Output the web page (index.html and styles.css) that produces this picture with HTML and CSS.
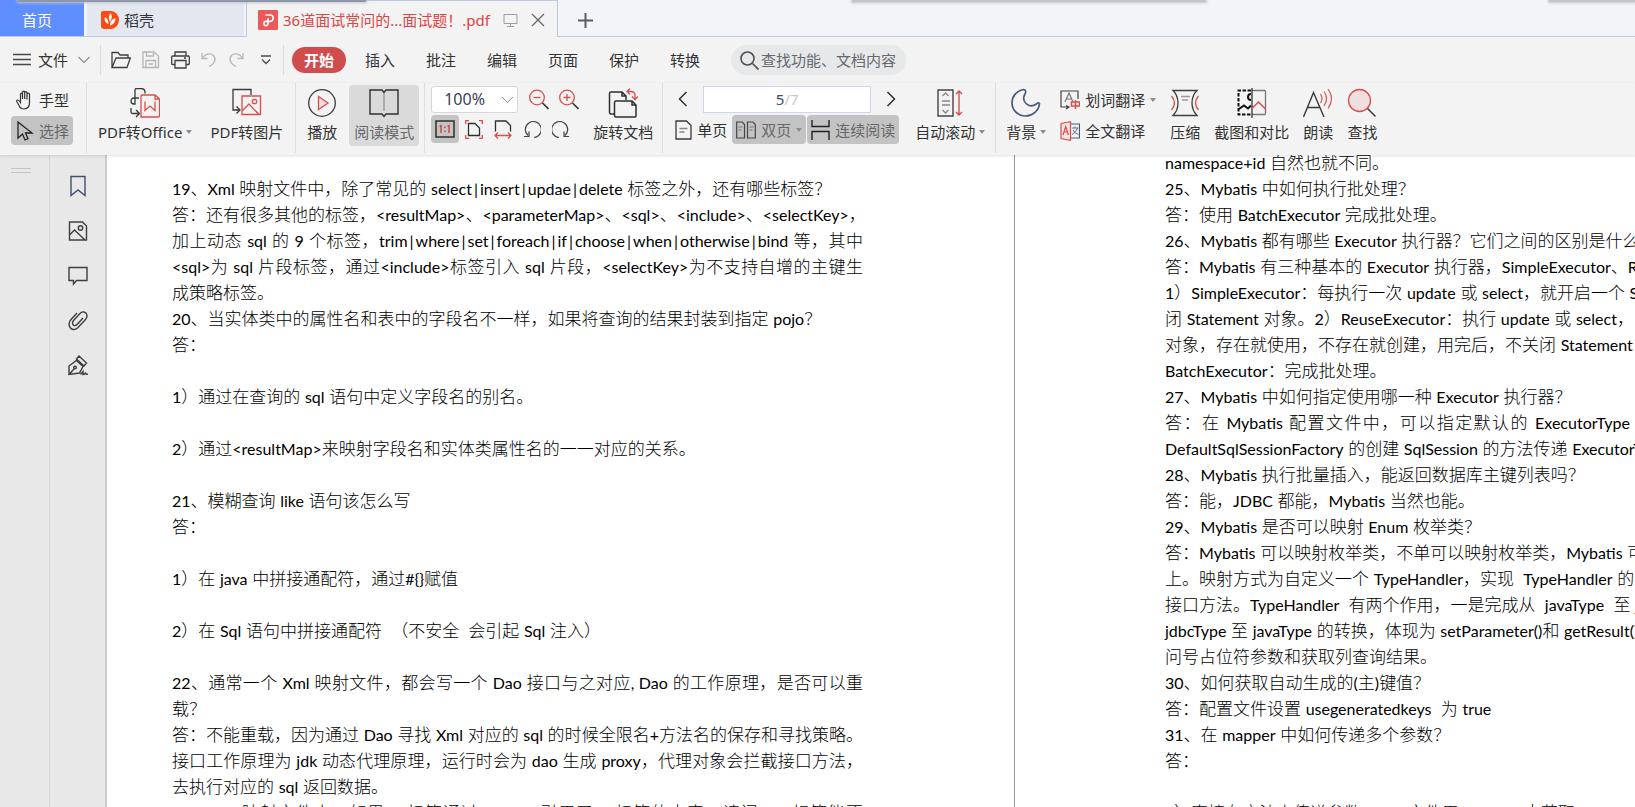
FILE: index.html
```html
<!DOCTYPE html>
<html lang="zh-CN">
<head>
<meta charset="utf-8">
<title>36道面试常问的...面试题！.pdf</title>
<link rel="stylesheet" href="styles.css">
</head>
<body>
<header class="tabs">
  <i class="shade shade-a"></i><i class="shade shade-b"></i><i class="shade shade-c"></i>
  <button class="tab home">首页</button>
  <button class="tab store">
    <svg width="18" height="20" viewBox="0 0 18 20"><path d="M2 1h8a8 9 0 0 1 0 18H3a3 3 0 0 1-3-3V3a2 2 0 0 1 2-2z" fill="#fb4a12"/><path d="M9.500 3c2 2.500 1.500 6-.5 9C7.500 8.500 7.500 6 9.500 3zM4 7c2.500 1.500 3.500 4 3.500 7C4.500 13 3 10 4 7zM14.500 8c0 4-2 6.500-5.500 7.500C9 12 11 9 14.500 8z" fill="#fff"/></svg>
    稻壳
  </button>
  <div class="tab active">
    <svg width="20" height="20" viewBox="0 0 20 20" fill="none"><rect width="20" height="20" rx="1" fill="#ea5a5a"/><path d="M7.500 5H12a3.200 3.200 0 0 1 0 6.400H8a2.100 2.100 0 1 0 2.100 2.100V8" stroke="#fff" stroke-width="1.600"/></svg>
    <span class="name">36道面试常问的...面试题！.pdf</span>
    <svg class="screen" width="15" height="15" viewBox="0 0 15 15" fill="none" stroke="#9b9da1"><path d="M1 1.500h13v9H1zM7.500 10.500v3M4 13.500h7"/></svg>
    <button class="plain" aria-label="关闭"><svg width="14" height="14" viewBox="0 0 14 14" stroke="#66686c" stroke-width="1.300"><path d="M1 1l12 12M13 1L1 13"/></svg></button>
  </div>
  <button class="plain add" aria-label="新建"><svg width="15" height="15" viewBox="0 0 15 15" stroke="#5c5d60" stroke-width="2"><path d="M7.500 0v15M0 7.500h15"/></svg></button>
</header>

<nav class="menu">
  <button class="plain file">
    <svg width="18" height="14" viewBox="0 0 18 14" stroke="#4a4a4a" stroke-width="1.300"><path d="M0 1.500h18M0 6.500h18M0 11.500h18"/></svg>
    文件
    <svg class="down" width="12" height="8" viewBox="0 0 12 8" fill="none" stroke="#8e8e8e" stroke-width="1.200"><path d="M.5 1L6 6.500 11.500 1"/></svg>
  </button>
  <div class="quick">
    <button class="plain" aria-label="打开"><svg width="20" height="18" viewBox="0 0 20 18" fill="none" stroke="#3f3f3f" stroke-width="1.300"><path d="M1 16V1.500h6l2 2.500h8v3M1 16.500L5 7h14.300L16 16.500z"/></svg></button>
    <button class="plain" aria-label="保存"><svg width="18" height="18" viewBox="0 0 18 18" fill="none" stroke="#b5b5b5" stroke-width="1.300"><path d="M1 1h11l4.500 4v11.500H1zM4.500 1v4h7V2M4 16.500v-7h9.500v7M6.500 13h4.500"/></svg></button>
    <button class="plain" aria-label="打印"><svg width="19" height="18" viewBox="0 0 19 18" fill="none" stroke="#3f3f3f" stroke-width="1.300"><path d="M4 5V1h11v4M4 13.500H1.500a.8.800 0 0 1-.8-.8V6q0-1 1-1h15.600q1 0 1 1v6.700q0 .8-.8.800H15M4 9.500h11V17H4zM13 7h2"/></svg></button>
    <button class="plain" aria-label="撤销"><svg width="16" height="16" viewBox="0 0 16 16" fill="none" stroke="#b9b9b9" stroke-width="1.300"><path d="M1 1v5.500h5.500M1.500 6C5 1 10 1 12.500 3.500c3 3.500 1.500 8-4.500 11"/></svg></button>
    <button class="plain" aria-label="重做"><svg width="16" height="16" viewBox="0 0 16 16" fill="none" stroke="#b9b9b9" stroke-width="1.300"><path d="M15 1v5.500H9.500M14.500 6C11 1 6 1 3.500 3.500c-3 3.500-1.500 8 4.500 11"/></svg></button>
    <button class="plain" aria-label="更多"><svg width="10" height="10" viewBox="0 0 10 10" fill="none" stroke="#4d4d4d" stroke-width="1.300"><path d="M0 1h10M1 4.500l4 4 4-4"/></svg></button>
  </div>
  <div class="items">
    <button class="start">开始</button>
    <button class="plain">插入</button>
    <button class="plain">批注</button>
    <button class="plain">编辑</button>
    <button class="plain">页面</button>
    <button class="plain">保护</button>
    <button class="plain">转换</button>
  </div>
  <label class="search">
    <svg width="19" height="19" viewBox="0 0 19 19" fill="none" stroke="#4f4f4f" stroke-width="1.600"><circle cx="7.500" cy="7.500" r="6.500"/><path d="M12.500 12.500l6 6"/></svg>
    <input type="text" placeholder="查找功能、文档内容" aria-label="查找功能、文档内容">
  </label>
</nav>

<section class="ribbon">
  <div class="group tools">
    <button class="row"><svg width="18" height="20" viewBox="0 0 18 20" fill="none" stroke="#333" stroke-width="1.200"><path d="M4.500 11V4.500q0-1.300 1-1.300t1 1.300V9 2.500q0-1.300 1.100-1.300t1.100 1.300V9 3q0-1.300 1.100-1.300T11 3v6.500-5q0-1.300 1.200-1.300t1.300 1.300V12q.3 6.500-5.500 7-3.500 0-5-3.500L.8 11.500q-.4-1.500 1-1.500 1.200 0 2.700 2.500z" /></svg>手型</button>
    <button class="row on"><svg width="18" height="20" viewBox="0 0 18 20" fill="none" stroke="#222" stroke-width="1.300"><path d="M2 1v16l4.500-4 2.500 6 3-1.300-2.500-5.700H16z"/></svg>选择</button>
  </div>

  <div class="group convert">
    <button class="big">
      <svg width="30" height="30" viewBox="0 0 30 30" fill="none" stroke="#3a3a3a" stroke-width="1.300"><path d="M5 11V2q0-1.500 1.500-1.500H11q4 0 4 4v1M9 10H4a3 3 0 1 0 0 6h1V9M1 20v4q0 1.500 1.500 1.500H9M6 22l3.500 3.500L6 29"/><path d="M11 29V8q0-1 1-1h13l4.500 4v17q0 1-1 1zM25 7v4h4" stroke="#d94f4f"/><path d="M15 13.500v9l5-4.500 5 4.500v-9" stroke="#d94f4f"/></svg>
      <span class="arrow">PDF转Office</span>
    </button>
    <button class="big">
      <svg width="30" height="30" viewBox="0 0 30 30" fill="none" stroke="#3a3a3a" stroke-width="1.300"><path d="M19 7V1.500H1V22h6M4.500 18.500L8 22l-3.500 3.500"/><g stroke="#d94f4f"><path d="M10 8h18.500v18.500H10zM10 23l7-7 10 10.500"/><circle cx="22.500" cy="13.500" r="2.200"/></g></svg>
      PDF转图片
    </button>
  </div>

  <div class="group show">
    <button class="big">
      <svg width="30" height="30" viewBox="0 0 30 30" fill="none" stroke="#3a3a3a" stroke-width="1.300"><circle cx="15" cy="15" r="13.300"/><path d="M11.500 8.500v13L21 15z" stroke="#d94f4f" fill="#f6dede"/></svg>
      播放
    </button>
    <button class="big read">
      <svg width="30" height="30" viewBox="0 0 30 30" fill="none" stroke="#2f2f2f" stroke-width="1.400"><path d="M15 4.500L13 2H1v24h12l2 2.500L17 26h12V2H17z"/><path d="M15 5v18" stroke="#9a9a9a"/></svg>
      阅读模式
    </button>
  </div>

  <div class="group zoom">
    <div class="stack">
      <div class="line-top">
        <select class="percent" aria-label="缩放比例"><option>100%</option></select>
        <button class="plain" aria-label="缩小"><svg width="20" height="21" viewBox="0 0 20 21" fill="none" stroke="#d94f4f" stroke-width="1.300"><circle cx="8" cy="8.500" r="7.300"/><path d="M4.500 8.500h7"/><path d="M13.500 14l6 6" stroke="#333" stroke-width="1.600"/></svg></button>
        <button class="plain" aria-label="放大"><svg width="20" height="21" viewBox="0 0 20 21" fill="none" stroke="#d94f4f" stroke-width="1.300"><circle cx="8" cy="8.500" r="7.300"/><path d="M4.500 8.500h7M8 5v7"/><path d="M13.500 14l6 6" stroke="#333" stroke-width="1.600"/></svg></button>
      </div>
      <div class="line-low">
        <button class="plain actual" aria-label="实际大小"><svg width="20" height="18" viewBox="0 0 20 18" fill="none" stroke="#2f2f2f" stroke-width="1.500"><path d="M1 1h18v16H1z"/><path d="M4.500 6.500L6 5.500v7.500M12.500 6.500l1.500-1v7.500M10 6.500V8M10 10.500V12" stroke="#d04545" stroke-width="1.400"/></svg></button>
        <button class="plain" aria-label="适合页面"><svg width="18" height="19" viewBox="0 0 18 19" fill="none" stroke="#2f2f2f" stroke-width="1.300"><path d="M3.500 3.500H10L14.500 8v7.500h-11z"/><path d="M.7 4V.7H4M14 .7h3.300V4M.7 15v3.300H4M14 18.300h3.300V15" stroke="#d94f4f"/></svg></button>
        <button class="plain" aria-label="适合宽度"><svg width="18" height="19" viewBox="0 0 18 19" fill="none" stroke="#2f2f2f" stroke-width="1.300"><path d="M1.500 11.500V1h10.500l4.500 4.500v6"/><path d="M1 15.500h16M4 12.500l-3 3 3 3M14 12.500l3 3-3 3" stroke="#d94f4f"/></svg></button>
        <button class="plain" aria-label="向左旋转"><svg width="18" height="19" viewBox="0 0 18 19" fill="none" stroke="#444" stroke-width="1.200"><path d="M5 15.500A8 8 0 1 1 11 17.500M1 16.500h5v-5"/></svg></button>
        <button class="plain" aria-label="向右旋转"><svg width="18" height="19" viewBox="0 0 18 19" fill="none" stroke="#444" stroke-width="1.200"><path d="M13 15.500A8 8 0 1 0 7 17.500M17 16.500h-5v-5"/></svg></button>
      </div>
    </div>
    <button class="big">
      <svg width="30" height="30" viewBox="0 0 30 30" fill="none" stroke="#2f2f2f" stroke-width="1.500"><path d="M6 26H3q-1.500 0-1.500-1.500V5.500Q1.500 4 3 4h11l4 4v4M14 4v4h4"/><path d="M8 13h16l4 4v11q0 1-1 1H8q-1.500 0-1.500-1.500v-13Q6.500 13 8 13zM24 13v4h4" fill="#f3f3f3"/><path d="M19.500 3.500H23q4 0 4 4V11M22 .5l-3 3 3 3M24 8.500l3 3 3-3" stroke="#d94f4f" stroke-width="1.300"/></svg>
      旋转文档
    </button>
  </div>

  <div class="group paging">
    <div class="stack">
      <div class="line-top pager">
        <button class="plain" aria-label="上一页"><svg width="10" height="16" viewBox="0 0 10 16" fill="none" stroke="#2f2f2f" stroke-width="1.500"><path d="M8.500 1L1.500 8l7 7"/></svg></button>
        <button class="page-box">5<span>/7</span></button>
        <button class="plain" aria-label="下一页"><svg width="10" height="16" viewBox="0 0 10 16" fill="none" stroke="#2f2f2f" stroke-width="1.500"><path d="M1.500 1l7 7-7 7"/></svg></button>
      </div>
      <div class="modes">
        <button class="mode"><svg width="17" height="20" viewBox="0 0 17 20" fill="none" stroke="#3a3a3a" stroke-width="1.300"><path d="M1 1h10.500L16 5.500V19H1z"/><path d="M4.500 8.500h8M4.500 12h5" stroke="#888"/></svg>单页</button>
        <button class="mode on arrow"><svg width="20" height="18" viewBox="0 0 20 18" fill="none" stroke="#444" stroke-width="1.200"><path d="M.7 1h5.500L8.500 3.500V17H.7zM11.500 1H17l2.300 2.500V17h-7.800z"/><path d="M2.500 6h4M2.500 9h3M13.500 6h4M13.500 9h3" stroke="#777"/></svg>双页</button>
        <button class="mode on"><svg width="19" height="20" viewBox="0 0 19 20" fill="none" stroke="#222" stroke-width="1.400"><path d="M1 0v6.500h17V0M1 20v-8.500h17V20"/></svg>连续阅读</button>
      </div>
    </div>
    <button class="big">
      <svg width="30" height="30" viewBox="0 0 30 30" fill="none" stroke="#444" stroke-width="1.400"><path d="M3 2h15v26H3z"/><path d="M7.500 8L10.500 5l3 3M7.500 22l3 3 3-3M7 13h8M7 17h8" stroke="#888"/><path d="M24 3v24M21 6l3-3 3 3M21 24l3 3 3-3" stroke="#d94f4f"/></svg>
      <span class="arrow">自动滚动</span>
    </button>
  </div>

  <div class="group extra">
    <button class="big">
      <svg width="30" height="30" viewBox="0 0 30 30" fill="none" stroke="#495a7c" stroke-width="1.700"><path d="M12.500 1.500C5 3 1 8.500 1 15c0 7 6 13 13.500 13C21 28 28 23 28.500 15.500c-1-1-2-.5-3 .5-4 2.500-8 2-10.500-.5s-3-6-1-9.500c1-2 1-4.500-1.500-4.500z"/></svg>
      <span class="arrow">背景</span>
    </button>
    <div class="translate">
      <button class="row arrow"><svg width="20" height="20" viewBox="0 0 20 20" fill="none" stroke="#444" stroke-width="1.200"><path d="M18 9V1H1v16h8M6 15.500L9 17l-3 2"/><path d="M5 12L9 3l4 9M6.500 9h5" stroke="#777"/><path d="M11.500 12h8v4h-8zM15.500 10v9" stroke="#d94f4f" stroke-width="1.600"/></svg>划词翻译</button>
      <button class="row"><svg width="20" height="20" viewBox="0 0 20 20" fill="none" stroke="#d94f4f" stroke-width="1.200"><path d="M10 3h9.500v14H10" stroke="#495a7c"/><path d="M12 7h6.500M15 5.500V7M17.500 7q-1 4-5.500 6.500M13 9q1.500 3.500 5.500 4.500" stroke="#66748f" stroke-width="1"/><path d="M1 2.500L10.500.7v18.600L1 17.500z" fill="#fbe3e3"/><path d="M3 14L5.700 5.500 8.500 14M4 11h3.700"/></svg>全文翻译</button>
    </div>
    <button class="big">
      <svg width="30" height="30" viewBox="0 0 30 30" fill="none" stroke="#3f3f3f" stroke-width="1.300"><path d="M3 2.500h24q-5 5-5 12.500t5 12.500H3q5-5 5-12.500T3 2.500z"/><path d="M11 8.500h9M12 12h6" stroke="#999"/><path d="M1.500 8q6 7 0 14M28.500 8q-6 7 0 14" stroke="#d94f4f"/></svg>
      压缩
    </button>
    <button class="big">
      <svg width="30" height="30" viewBox="0 0 30 30" fill="none"><path d="M14 2.500H1.500v24H14" stroke="#111" stroke-width="2" stroke-dasharray="3.500 1.500"/><path d="M14 6a3 3 0 1 0 0 6M2 21l5-3.500 4 3 3-3" stroke="#111" stroke-width="2"/><path d="M15 2.500h12.500q1 0 1 1v22q0 1-1 1H15" stroke="#777" stroke-width="1.300"/><path d="M15 0v30" stroke="#333" stroke-width="1.300"/><path d="M15.500 20l6-6 7 7" stroke="#d94f4f" stroke-width="1.500"/></svg>
      截图和对比
    </button>
    <button class="big">
      <svg width="30" height="30" viewBox="0 0 30 30" fill="none" stroke="#3a3a3a" stroke-width="1.400"><path d="M.5 29L10.500 4.500 21 29M4.500 19.500h12.500"/><path d="M17.500 6q3 4.500 0 9M21 3.500q5 7 0 14.500M25 1q7 9.500 0 19.500" stroke="#d94f4f" stroke-width="1.200"/></svg>
      朗读
    </button>
    <button class="big">
      <svg width="30" height="30" viewBox="0 0 30 30" fill="none" stroke="#d94f4f" stroke-width="1.300"><circle cx="12.500" cy="12.500" r="11" fill="#f1dfdf"/><path d="M20.500 20.500l8 8" stroke="#333" stroke-width="1.500"/></svg>
      查找
    </button>
  </div>
</section>

<main class="work">
  <div class="grip"><i></i></div>
  <aside class="side">
    <button class="plain" aria-label="书签"><svg width="20" height="22" viewBox="0 0 20 22" fill="none" stroke="#414f6b" stroke-width="1.400"><path d="M3 1.500h14v19L10 15l-7 5.500z"/></svg></button>
    <button class="plain" aria-label="缩略图"><svg width="20" height="22" viewBox="0 0 20 22" fill="none" stroke="#3f3f3f" stroke-width="1.400"><path d="M1.500 2h13L18.500 6v14h-17zM1.500 15l5-5 10.500 10"/><circle cx="12.500" cy="8" r="2.200"/></svg></button>
    <button class="plain" aria-label="批注"><svg width="20" height="22" viewBox="0 0 20 22" fill="none" stroke="#3f3f3f" stroke-width="1.400"><path d="M1 2.500h18v13H8.500L5.500 19v-3.500H1z"/></svg></button>
    <button class="plain" aria-label="附件"><svg width="20" height="22" viewBox="0 0 20 22" fill="none" stroke="#3f3f3f" stroke-width="1.400"><path d="M9 3L3 9.500C-1 14 2 19 5 19.500c2 .3 3.500-.5 5-2l7.500-8c3-3.500 1-7-1.500-7.500-1.500-.3-3 .2-4.500 2l-6 6.500c-2 2.500-.5 4.500.5 5 1.200.4 2.200 0 3.300-1.200L15 8"/></svg></button>
    <button class="plain" aria-label="签名"><svg width="20" height="22" viewBox="0 0 20 22" fill="none" stroke="#3f3f3f" stroke-width="1.400"><path d="M1 19.500V11l7.500-5.500 6.500 6L11.500 18 1 19.500l5-5.500M8.500 4L11 1l7.500 7-2.500 3L8.500 4z"/><circle cx="7" cy="12.500" r="1.300"/><path d="M12.500 19.500l2.500-3v3q2 0 2.500-2 .3 2.500 2.500 1.500"/></svg></button>
  </aside>
  <div class="viewer">
    <article class="page">
      <p></p>
      <p><span>19</span>、<span>Xml</span> 映射文件中，除了常见的 <span>select<b>|</b>insert<b>|</b>updae<b>|</b>delete</span> 标签之外，还有哪些标签？</p>
      <p class="full">答：还有很多其他的标签，<span>&lt;resultMap&gt;</span>、<span>&lt;parameterMap&gt;</span>、<span>&lt;sql&gt;</span>、<span>&lt;include&gt;</span>、<span>&lt;selectKey&gt;</span>，</p>
      <p class="full">加上动态 <span>sql</span> 的 <span>9</span> 个标签，<span>trim<b>|</b>where<b>|</b>set<b>|</b>foreach<b>|</b>if<b>|</b>choose<b>|</b>when<b>|</b>otherwise<b>|</b>bind</span> 等，其中</p>
      <p class="full"><span>&lt;sql&gt;</span>为 <span>sql</span> 片段标签，通过<span>&lt;include&gt;</span>标签引入 <span>sql</span> 片段，<span>&lt;selectKey&gt;</span>为不支持自增的主键生</p>
      <p>成策略标签。</p>
      <p><span>20</span>、当实体类中的属性名和表中的字段名不一样，如果将查询的结果封装到指定 <span>pojo</span>？</p>
      <p>答：</p>
      <p></p>
      <p><span>1</span>）通过在查询的 <span>sql</span> 语句中定义字段名的别名。</p>
      <p></p>
      <p><span>2</span>）通过<span>&lt;resultMap&gt;</span>来映射字段名和实体类属性名的一一对应的关系。</p>
      <p></p>
      <p><span>21</span>、模糊查询 <span>like</span> 语句该怎么写</p>
      <p>答：</p>
      <p></p>
      <p><span>1</span>）在 <span>java</span> 中拼接通配符，通过<span>#{}</span>赋值</p>
      <p></p>
      <p><span>2</span>）在 <span>Sql</span> 语句中拼接通配符&nbsp; （不安全&nbsp; 会引起 <span>Sql</span> 注入）</p>
      <p></p>
      <p class="full"><span>22</span>、通常一个 <span>Xml</span> 映射文件，都会写一个 <span>Dao</span> 接口与之对应<span>, Dao</span> 的工作原理，是否可以重</p>
      <p>载？</p>
      <p class="full">答：不能重载，因为通过 <span>Dao</span> 寻找 <span>Xml</span> 对应的 <span>sql</span> 的时候全限名<span>+</span>方法名的保存和寻找策略。</p>
      <p class="full">接口工作原理为 <span>jdk</span> 动态代理原理，运行时会为 <span>dao</span> 生成 <span>proxy</span>，代理对象会拦截接口方法，</p>
      <p>去执行对应的 <span>sql</span> 返回数据。</p>
      <p class="full"><span>23</span>、<span>Xml</span> 映射文件中，如果 <span>A</span> 标签通过 <span>include</span> 引用了 <span>B</span> 标签的内容，请问，<span>B</span> 标签能否</p>
    </article>
    <article class="page">
      <p><span>namespace+id</span> 自然也就不同。</p>
      <p><span>25</span>、<span>Mybatis</span> 中如何执行批处理？</p>
      <p>答：使用 <span>BatchExecutor</span> 完成批处理。</p>
      <p><span>26</span>、<span>Mybatis</span> 都有哪些 <span>Executor</span> 执行器？它们之间的区别是什么？</p>
      <p>答：<span>Mybatis</span> 有三种基本的 <span>Executor</span> 执行器，<span>SimpleExecutor</span>、<span>ReuseExecutor</span>、</p>
      <p><span>1</span>）<span>SimpleExecutor</span>：每执行一次 <span>update</span> 或 <span>select</span>，就开启一个 <span>Statement</span></p>
      <p>闭 <span>Statement</span> 对象。<span>2</span>）<span>ReuseExecutor</span>：执行 <span>update</span> 或 <span>select</span>，以 <span>sql</span></p>
      <p>对象，存在就使用，不存在就创建，用完后，不关闭 <span>Statement</span> 对象，</p>
      <p><span>BatchExecutor</span>：完成批处理。</p>
      <p><span>27</span>、<span>Mybatis</span> 中如何指定使用哪一种 <span>Executor</span> 执行器？</p>
      <p class="full">答：在 <span>Mybatis</span> 配置文件中，可以指定默认的 <span>ExecutorType</span> 执行器类型，也可以手动给</p>
      <p><span>DefaultSqlSessionFactory</span> 的创建 <span>SqlSession</span> 的方法传递 <span>ExecutorType</span></p>
      <p><span>28</span>、<span>Mybatis</span> 执行批量插入，能返回数据库主键列表吗？</p>
      <p>答：能，<span>JDBC</span> 都能，<span>Mybatis</span> 当然也能。</p>
      <p><span>29</span>、<span>Mybatis</span> 是否可以映射 <span>Enum</span> 枚举类？</p>
      <p>答：<span>Mybatis</span> 可以映射枚举类，不单可以映射枚举类，<span>Mybatis</span> 可以映射</p>
      <p>上。映射方式为自定义一个 <span>TypeHandler</span>，实现&nbsp; <span>TypeHandler</span> 的 <span>setParameter()</span></p>
      <p>接口方法。<span>TypeHandler</span>&nbsp; 有两个作用，一是完成从&nbsp; <span>javaType</span>&nbsp; 至 <span>jdbcType</span></p>
      <p><span>jdbcType</span> 至 <span>javaType</span> 的转换，体现为 <span>setParameter()</span>和 <span>getResult()</span></p>
      <p>问号占位符参数和获取列查询结果。</p>
      <p><span>30</span>、如何获取自动生成的<span>(</span>主<span>)</span>键值？</p>
      <p>答：配置文件设置 <span>usegeneratedkeys</span>&nbsp; 为 <span>true</span></p>
      <p><span>31</span>、在 <span>mapper</span> 中如何传递多个参数？</p>
      <p>答：</p>
      <p></p>
      <p><span>1</span>）直接在方法中传递参数，<span>xml</span> 文件用 <span>#{0} #{1}</span>来获取</p>
    </article>
  </div>
</main>
</body>
</html>
```

FILE: styles.css
```css
* { box-sizing: border-box; }

body {
  margin: 0;
  height: 100vh;
  display: flex;
  flex-direction: column;
  overflow: hidden;
  background: #f3f3f3;
  color: #333;
  font: 15px/20px "Noto Sans", "Noto Sans CJK SC", sans-serif;
}

button, input, select { font: inherit; color: inherit; }
button {
  border: 0;
  padding: 0;
  background: none;
  white-space: nowrap;
  flex: none;
}
svg { display: block; flex: none; }
.plain { display: flex; align-items: center; }

/* document tabs */
.tabs {
  position: relative;
  flex: none;
  display: flex;
  height: 37px;
  background: #f2f4f9;
  border-bottom: 1px solid #bcc8db;
}
.tab { display: flex; align-items: center; padding-top: 4px; }
.home {
  width: 84px;
  justify-content: center;
  padding-right: 10px;
  background: #5f8fff;
  color: #fff;
}
.store {
  gap: 5px;
  width: 157px;
  margin-left: 3px;
  padding-left: 14px;
  background: #e2e7f0;
}
.active {
  margin: 0 0 -1px 2px;
  padding: 2px 12px 0 11px;
  border: solid #bcc8db;
  border-width: 1px 1px 0;
  background: #f3f3f3;
  color: #da4545;
}
.name { margin: 0 13px 0 5px; }
.screen { margin-right: 13px; }
.add { margin-left: 20px; padding-top: 4px; }
.shade {
  position: absolute;
  top: 0;
  height: 2px;
  background: #c3c5c9;
  box-shadow: 0 0 3px 1px #c3c5c9;
}
.shade-a { left: 18px; width: 348px; background: #8f98ab; }
.shade-b { left: 852px; width: 354px; }
.shade-c { left: 1549px; right: 0; }

/* menu row */
.menu {
  flex: none;
  display: flex;
  align-items: center;
  height: 46px;
  padding-left: 13px;
}
.file { gap: 7px; padding-right: 10px; }
.down { margin-left: 3px; }
.quick {
  display: flex;
  align-items: center;
  gap: 11px;
  height: 30px;
  padding: 0 12px 0 10px;
  border: solid #dcdcdc;
  border-width: 0 1px;
}
.quick > :last-child { margin-left: 6px; }
.items { display: flex; align-items: center; gap: 31px; margin-left: 8px; }
.start {
  width: 54px;
  height: 26px;
  margin-right: -12px;
  border-radius: 13px;
  background: #d14d4d;
  color: #fff;
  font-weight: 700;
}
.search {
  display: flex;
  align-items: center;
  gap: 2px;
  width: 175px;
  height: 30px;
  margin-left: 31px;
  padding-left: 9px;
  border-radius: 15px;
  background: #e7e8ea;
}
.search input {
  width: 140px;
  padding: 0;
  border: 0;
  outline: 0;
  background: none;
}
.search input::placeholder { color: #66686b; opacity: 1; }

/* ribbon */
.ribbon {
  position: relative;
  flex: none;
  display: flex;
  height: 72px;
  box-shadow: 0 1px 3px rgba(0, 0, 0, .12);
  background: #f3f3f3;
}
.group {
  display: flex;
  align-items: flex-start;
  flex: none;
  height: 70px;
  padding-top: 2px;
  border-right: 1px solid #dedede;
}
.big {
  display: flex;
  flex-direction: column;
  align-items: center;
  gap: 4px;
  height: 61px;
  padding-top: 3px;
}
.arrow { display: flex; align-items: center; gap: 4px; }
.arrow::after {
  content: "";
  border: solid transparent;
  border-width: 4px 3px 0;
  border-top-color: #8c8c8c;
}
.row {
  display: flex;
  align-items: center;
  gap: 5px;
  height: 29px;
  border-radius: 4px;
}
.on { background: #c3c3c3; color: #66686b; }

.tools { flex-direction: column; gap: 2px; padding-left: 11px; padding-right: 13px; }
.tools .row { width: 62px; padding-left: 5px; }
.convert { gap: 18px; padding-left: 11px; padding-right: 12px; }
.show { gap: 12px; padding-left: 11px; padding-right: 5px; }
.read { width: 70px; border-radius: 4px; background: #dadada; color: #66686b; }

.stack { display: flex; flex-direction: column; gap: 2px; }
.line-top, .line-low { display: flex; align-items: center; gap: 10px; height: 28px; }
.zoom { gap: 14px; padding-left: 6px; padding-right: 9px; }
.percent {
  appearance: none;
  width: 87px;
  height: 27px;
  padding: 0 0 0 12px;
  border: 1px solid #d5d7db;
  border-radius: 3px;
  color: #3a4152;
  font-size: 16px;
  background:
    linear-gradient(45deg, transparent 44%, #8d94a3 44% 58%, transparent 58%) 70px 10px / 6px 6px no-repeat,
    linear-gradient(-45deg, transparent 44%, #8d94a3 44% 58%, transparent 58%) 75px 10px / 6px 6px no-repeat,
    #fff;
}
.percent + .plain { margin-left: 1px; }
.line-low { gap: 11px; }
.actual {
  justify-content: center;
  width: 28px;
  height: 28px;
  margin-right: -5px;
  border-radius: 4px;
  background: #c3c3c3;
}

.paging { gap: 16px; padding-left: 12px; padding-right: 10px; }
.pager { gap: 15px; padding-left: 3px; }
.page-box {
  width: 168px;
  height: 27px;
  border: 1px solid #cdd6ea;
  background: #fff;
  color: #3f4e6b;
}
.page-box span { color: #c9c9c9; }
.modes { display: flex; gap: 1px; }
.mode {
  display: flex;
  align-items: center;
  gap: 5px;
  height: 29px;
  padding: 0 4px;
  border-radius: 4px;
}
.mode:first-child { padding-left: 0; }

.extra { gap: 14px; padding-left: 10px; border-right: 0; }
.translate { display: flex; flex-direction: column; gap: 2px; }

/* work area */
.work { flex: 1; display: flex; min-height: 0; background: #e8e8e8; }
.grip { flex: none; width: 50px; padding: 13px 18px 0 11px; border-right: 1px solid #d6d6d6; }
.grip i { display: block; height: 5px; border: solid #c4c4c4; border-width: 1px 0; }
.side {
  flex: none;
  display: flex;
  flex-direction: column;
  align-items: center;
  gap: 23px;
  width: 57px;
  padding-top: 20px;
  border-right: 2px solid #cbcbd0;
}
.viewer {
  flex: 1;
  display: flex;
  min-width: 0;
  margin-top: -5px;
  overflow: hidden;
  background: #fff;
}
.page {
  flex: none;
  padding: 0 151px 0 65px;
  border-right: 1px solid #969696;
}
.page + .page { padding-left: 150px; }
.page p {
  width: 691px;
  height: 26px;
  margin: 0;
  color: #000;
  font: 300 17px/26px Lato, "Noto Sans CJK SC", sans-serif;
  white-space: nowrap;
}
.page span { font-weight: 400; font-size: 16px; }
.page b { padding: 0 2px; font-weight: 400; }
.page .full { text-align-last: justify; }
```
